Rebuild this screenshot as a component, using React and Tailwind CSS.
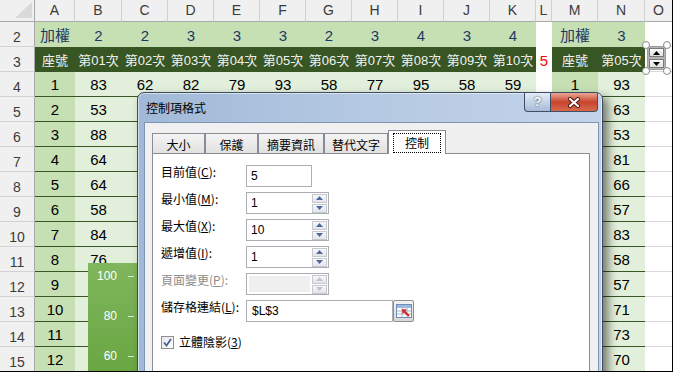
const sheetFont = "font-['Liberation_Sans','Noto_Sans_CJK_TC',sans-serif]";
const dlgFont = "font-['Noto_Sans_CJK_TC','Liberation_Sans',sans-serif]";

const cols = [
  { id: "A", w: "w-[40px]" },
  { id: "B", w: "w-[47px]" },
  { id: "C", w: "w-[46px]" },
  { id: "D", w: "w-[46px]" },
  { id: "E", w: "w-[46px]" },
  { id: "F", w: "w-[46px]" },
  { id: "G", w: "w-[46px]" },
  { id: "H", w: "w-[46px]" },
  { id: "I", w: "w-[46px]" },
  { id: "J", w: "w-[46px]" },
  { id: "K", w: "w-[46px]" },
  { id: "L", w: "w-[16px]" },
  { id: "M", w: "w-[46px]" },
  { id: "N", w: "w-[47px]" },
  { id: "O", w: "w-[28px]" },
];

const weights = ["加權", 2, 2, 3, 3, 3, 2, 3, 4, 3, 4, "", "加權", 3, ""];
const heads = [
  "座號", "第01次", "第02次", "第03次", "第04次", "第05次", "第06次", "第07次",
  "第08次", "第09次", "第10次", "5", "座號", "第05次", "",
];

// rows 4..15: seat number, visible scores, N column
const scores = [
  { a: 1, v: [83, 62, 82, 79, 93, 58, 77, 95, 58, 59], m: 1, n: 93 },
  { a: 2, v: [53], n: 63 },
  { a: 3, v: [88], n: 53 },
  { a: 4, v: [64], n: 81 },
  { a: 5, v: [64], n: 66 },
  { a: 6, v: [58], n: 57 },
  { a: 7, v: [84], n: 83 },
  { a: 8, v: [76], n: 58 },
  { a: 9, v: [], n: 57 },
  { a: 10, v: [], n: 71 },
  { a: 11, v: [], n: 73 },
  { a: 12, v: [], n: 70 },
];

function RowHead({ n }) {
  return (
    <div className="flex h-[25px] w-[35px] shrink-0 items-end justify-center border-r border-b border-r-[#a9a9a9] border-b-[#d2d2d2] bg-[#f0f0f0] pb-[2px] text-[14px] leading-none text-[#3b3b3b]">
      {n}
    </div>
  );
}

function Cell({ col, children, kind }) {
  let cls = "bg-white";
  if (col === 11) cls = "bg-white";
  else if (col === 14) cls = "bg-white border-b border-[#d9d9d9]";
  else if (kind === "w") cls = "bg-[#c6e0b4] text-[#1f3864] text-[15px]";
  else if (kind === "h") cls = "bg-[#375623] text-[#f2f2f2] text-[13px]";
  else if (col === 0 || col === 12) cls = "bg-[#c6e0b4] border-b border-[#375623] text-black text-[15px]";
  else cls = "bg-[#e2efda] border-b border-[#375623] text-black text-[15px]";
  return (
    <div className={`flex h-[25px] shrink-0 items-center justify-center whitespace-nowrap pt-[1px] leading-none ${cols[col].w} ${cls}`}>
      {children}
    </div>
  );
}

function Sheet() {
  return (
    <div className={`flex flex-col ${sheetFont}`}>
      <div className="flex h-[22px] shrink-0">
        <div className="h-[22px] w-[35px] shrink-0 border-r border-b border-[#a9a9a9] bg-[#f0f0f0]">
          <svg width="34" height="21" viewBox="0 0 34 21">
            <polygon points="15,18 32,18 32,2" fill="#d9d9d9" />
          </svg>
        </div>
        {cols.map((c) => (
          <div
            key={c.id}
            className={`flex h-[22px] shrink-0 items-center justify-center border-r border-b border-r-[#d0d0d0] border-b-[#a9a9a9] bg-[#f0f0f0] text-[14px] text-[#3b3b3b] ${c.w}`}
          >
            {c.id}
          </div>
        ))}
      </div>

      <div className="flex">
        <RowHead n={2} />
        {weights.map((t, i) => (
          <Cell key={i} col={i} kind="w">{t}</Cell>
        ))}
      </div>
      <div className="flex">
        <RowHead n={3} />
        {heads.map((t, i) => (
          <Cell key={i} col={i} kind="h">
            {i === 11 ? <span className="text-[15px] text-[#ff0000]">{t}</span> : t}
          </Cell>
        ))}
      </div>
      {scores.map((r, ri) => (
        <div key={ri} className="flex">
          <RowHead n={ri + 4} />
          {cols.map((c, i) => {
            let t = "";
            if (i === 0) t = r.a;
            else if (i >= 1 && i <= 10) t = r.v[i - 1] ?? "";
            else if (i === 12) t = r.m ?? "";
            else if (i === 13) t = r.n;
            return (
              <Cell key={i} col={i}>{t}</Cell>
            );
          })}
        </div>
      ))}
    </div>
  );
}

function Chart() {
  return (
    <div className={`absolute left-[88px] top-[263px] flex h-[120px] w-[60px] flex-col gap-[24px] bg-gradient-to-b from-[#80b65c] to-[#67a540] pt-[5px] ${sheetFont}`}>
      {[100, 80, 60].map((v) => (
        <div key={v} className="flex h-[16px] items-center">
          <span className="w-[29px] text-right text-[12px] leading-none text-white">{v}</span>
          <span className="ml-[11px] h-px w-[6px] bg-[#d8ead0]" />
        </div>
      ))}
    </div>
  );
}

function SheetSpin() {
  return (
    <div className="absolute left-[646px] top-[45px] h-[26px] w-[21px]">
      <div className="absolute inset-[1px] flex flex-col gap-[2px] border border-[#9c9c9c] bg-[#b4b4b4] p-px">
        <div className="flex flex-1 items-center justify-center border border-[#7a7a7a] bg-gradient-to-b from-[#fbfbfb] to-[#e0e0e0]">
          <svg width="7" height="4" viewBox="0 0 7 4"><path d="M0 4L3.5 0L7 4Z" fill="#000" /></svg>
        </div>
        <div className="flex flex-1 items-center justify-center border border-[#7a7a7a] bg-gradient-to-b from-[#fbfbfb] to-[#e0e0e0]">
          <svg width="7" height="4" viewBox="0 0 7 4"><path d="M0 0L3.5 4L7 0Z" fill="#000" /></svg>
        </div>
      </div>
      <span className="absolute -left-[4px] -top-[4px] h-[8px] w-[8px] rounded-full border border-[#8a8a8a] bg-white" />
      <span className="absolute -right-[4px] -top-[4px] h-[8px] w-[8px] rounded-full border border-[#8a8a8a] bg-white" />
      <span className="absolute -bottom-[4px] -left-[4px] h-[8px] w-[8px] rounded-full border border-[#8a8a8a] bg-white" />
      <span className="absolute -bottom-[4px] -right-[4px] h-[8px] w-[8px] rounded-full border border-[#8a8a8a] bg-white" />
    </div>
  );
}

function Spinner({ disabled }) {
  const fill = disabled ? "#c4c4c4" : "#4c68a0";
  return (
    <div className="mr-px flex flex-col gap-px">
      <div className="flex h-[9px] w-[15px] items-center justify-center border border-[#c5c8d0] bg-gradient-to-b from-[#f7f8fa] to-[#e2e5eb]">
        <svg width="7" height="4" viewBox="0 0 7 4"><path d="M0 4L3.5 0L7 4Z" fill={fill} /></svg>
      </div>
      <div className="flex h-[9px] w-[15px] items-center justify-center border border-[#c5c8d0] bg-gradient-to-b from-[#f7f8fa] to-[#e2e5eb]">
        <svg width="7" height="4" viewBox="0 0 7 4"><path d="M0 0L3.5 4L7 0Z" fill={fill} /></svg>
      </div>
    </div>
  );
}

function Label({ text, k, disabled }) {
  return (
    <div className={`w-[85px] shrink-0 self-start text-[12px] leading-[14px] ${disabled ? "text-[#8d8d8d]" : "text-black"}`}>
      {text}(<span className="underline">{k}</span>):
    </div>
  );
}

function FormRow({ label, k, value, spin, disabled }) {
  return (
    <div className="flex h-[22px] items-center">
      <Label text={label} k={k} disabled={disabled} />
      {spin ? (
        <div className="flex h-[22px] w-[83px] items-center border border-[#abadb3] bg-white">
          {disabled ? (
            <div className="mx-[2px] h-[16px] flex-1 bg-[#efefef]" />
          ) : (
            <span className="flex-1 pl-[4px] font-['Liberation_Sans',sans-serif] text-[12px]">{value}</span>
          )}
          <Spinner disabled={disabled} />
        </div>
      ) : (
        <div className="flex h-[22px] w-[66px] items-center border border-[#abadb3] bg-white pl-[4px] font-['Liberation_Sans',sans-serif] text-[12px]">
          {value}
        </div>
      )}
    </div>
  );
}

function Dialog() {
  const tabs = ["大小", "保護", "摘要資訊", "替代文字"];
  const tabW = ["w-[53px]", "w-[53px]", "w-[66px]", "w-[64px]"];
  return (
    <div className={`absolute left-[137px] top-[92px] h-[300px] w-[466px] rounded-t-[7px] border border-[#3d4c5f] bg-gradient-to-r from-[#a1b9d8] via-[#b5c9e2] to-[#c3d4ea] shadow-[inset_0_0_0_1px_rgba(255,255,255,0.55),5px_5px_10px_rgba(0,0,0,0.5)] ${dlgFont}`}>
      <div className="flex h-[29px] items-start justify-between">
        <div className="flex h-full items-center pl-[8px] text-[12px] text-black">控制項格式</div>
        <div className="mr-[4px] flex h-[19px]">
          <div className="flex w-[27px] items-center justify-center rounded-bl-[4px] border border-t-0 border-[#3f4e62] bg-gradient-to-b from-[#e4ecf6] to-[#a6bcd9] font-['Liberation_Sans',sans-serif] text-[13px] font-bold text-white [text-shadow:0_0_2px_#1d2b3c]">
            ?
          </div>
          <div className="flex w-[47px] items-center justify-center rounded-br-[4px] border border-t-0 border-l-0 border-[#3f4e62] bg-gradient-to-b from-[#e9a595] via-[#c7432c] to-[#d9694f]">
            <svg width="14" height="11" viewBox="0 0 14 11">
              <path d="M3 2L11 9M11 2L3 9" stroke="#4a1510" strokeWidth="4" strokeLinecap="round" />
              <path d="M3 2L11 9M11 2L3 9" stroke="#fff" strokeWidth="2.2" strokeLinecap="round" />
            </svg>
          </div>
        </div>
      </div>

      <div className="ml-[6px] mr-[3px] h-[262px] border border-[#7e95b2] bg-[#f0f0f0]">
        <div className="flex h-[30px] items-end pl-[7px]">
          {tabs.map((t, i) => (
            <div
              key={t}
              className={`flex h-[20px] items-center justify-center border border-b-0 border-[#898c95] bg-gradient-to-b from-[#f4f4f4] to-[#e1e1e1] pt-[2px] text-[12px] ${tabW[i]}`}
            >
              {t}
            </div>
          ))}
          <div className="relative z-10 -mb-px flex h-[24px] w-[58px] items-center justify-center border border-b-0 border-[#898c95] bg-white px-[4px] pt-[2px] pb-[1px]">
            <div className="flex h-full w-full items-center justify-center border border-dotted border-black text-[12px]">控制</div>
          </div>
        </div>

        <div className="ml-[7px] h-[231px] w-[438px] border border-[#898c95] bg-white pl-[8px] pt-[11px]">
          <div className="flex flex-col gap-[5px]">
            <FormRow label="目前值" k="C" value="5" />
            <FormRow label="最小值" k="M" value="1" spin />
            <FormRow label="最大值" k="X" value="10" spin />
            <FormRow label="遞增值" k="I" value="1" spin />
            <FormRow label="頁面變更" k="P" spin disabled />
            <div className="flex h-[22px] items-center">
              <Label text="儲存格連結" k="L" />
              <div className="flex h-[22px] w-[147px] items-center border border-[#abadb3] bg-white pl-[5px] font-['Liberation_Sans',sans-serif] text-[12px]">
                $L$3
              </div>
              <div className="flex h-[22px] w-[21px] items-center justify-center rounded-[2px] border border-[#8e8f8f] bg-gradient-to-b from-[#f4f4f4] to-[#d8d8d8]">
                <svg width="16" height="14" viewBox="0 0 16 14">
                  <rect x="0.5" y="0.5" width="15" height="13" fill="#fff" stroke="#6f8db9" />
                  <rect x="1" y="1" width="14" height="3" fill="#9fb8dc" />
                  <path d="M1 7H15M1 10H15M6 4V13M11 4V13" stroke="#9fb8dc" strokeWidth="1" />
                  <path d="M13 12L8.5 7.5" stroke="#d42a1c" strokeWidth="2.2" />
                  <path d="M6 5L11 5.5L6.5 10Z" fill="#d42a1c" />
                </svg>
              </div>
            </div>
          </div>
          <div className="mt-[13px] flex items-center gap-[5px]">
            <div className="flex h-[13px] w-[13px] items-center justify-center border border-[#8f8f8f] bg-gradient-to-br from-[#e6e6e6] to-[#ffffff]">
              <svg width="9" height="9" viewBox="0 0 9 9">
                <path d="M1 4.5L3.5 7.5L8 1" stroke="#4a5f97" strokeWidth="1.8" fill="none" />
              </svg>
            </div>
            <span className="text-[12px] leading-[14px] text-black">
              立體陰影(<span className="underline">3</span>)
            </span>
          </div>
        </div>
      </div>
    </div>
  );
}

export default function App() {
  return (
    <div className="relative h-[372px] w-[673px] overflow-hidden border-r border-b border-black bg-white">
      <Sheet />
      <SheetSpin />
      <Chart />
      <Dialog />
    </div>
  );
}
